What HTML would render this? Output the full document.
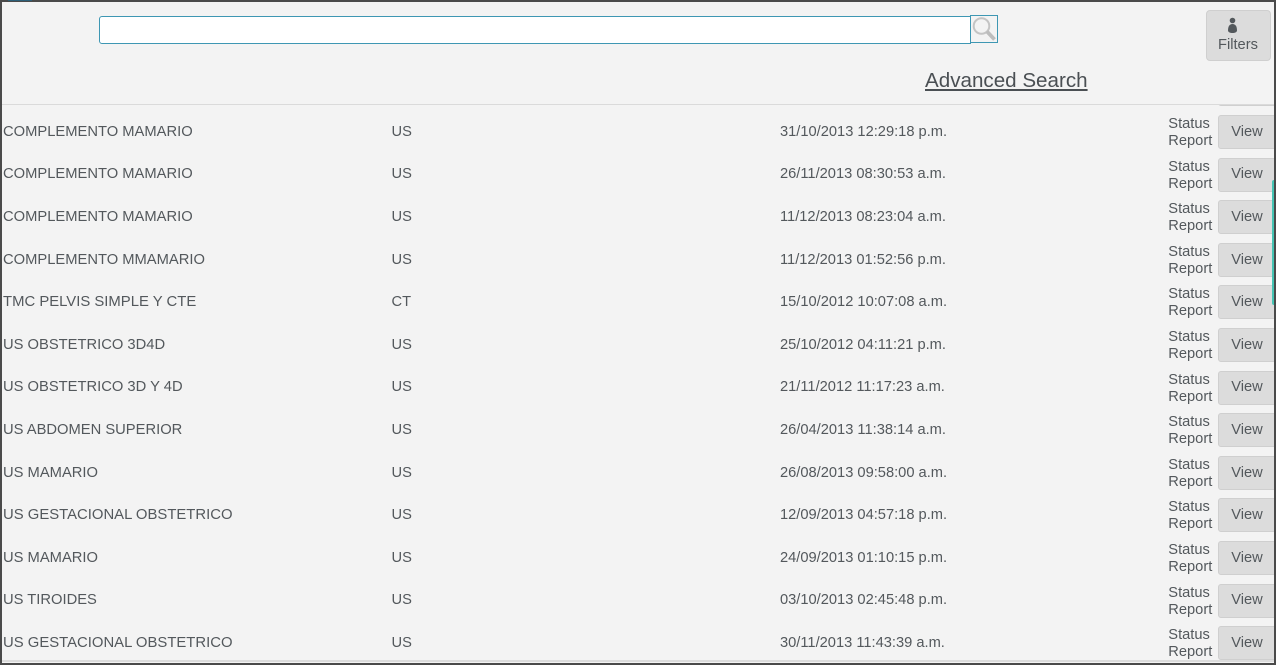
<!DOCTYPE html>
<html>
<head>
<meta charset="utf-8">
<style>
html,body{margin:0;padding:0;width:1276px;height:665px;overflow:hidden;background:#f3f3f3;font-family:"Liberation Sans",sans-serif;color:#53585c;font-size:14.67px}
.a{position:absolute;white-space:nowrap}
#list{position:absolute;left:0;top:105px;width:1274px;height:556px;overflow:hidden}
.r{position:absolute;left:0;width:1274px;height:34px}
.r span{position:absolute;white-space:nowrap;line-height:17px;top:8.8px}
.r .c1{left:3px;font-size:14.74px}.r .c2{left:391.5px}.r .c3{left:780px}
.r .c1.w{font-size:14.86px}
.r .s{left:1168.3px;top:1px;white-space:normal;width:48px}
.r b{position:absolute;font-weight:normal;left:1218px;top:0;width:60px;height:32px;background:#dcdcdc;border:1px solid #cfcfcf;border-radius:3px;text-align:center;line-height:32px;box-sizing:content-box}
.r b i{font-style:normal;position:relative;left:-2px;top:-.2px}
</style>
</head>
<body>
<div class="a" style="left:99px;top:16px;width:872px;height:28px;box-sizing:border-box;background:#fff;border:1px solid #3e97b3;border-radius:3px 0 0 3px"></div>
<div class="a" style="left:970px;top:15px;width:28px;height:28px;box-sizing:border-box;border:1px solid #3e97b3"></div>
<svg class="a" style="left:971px;top:16px" width="26" height="26" viewBox="0 0 26 26"><circle cx="10.5" cy="10" r="7.8" fill="none" stroke="#c4c4c4" stroke-width="2"/><path d="M16 15.500L23.500 23.500" stroke="#bdbdbd" stroke-width="3.800" fill="none"/></svg>
<div class="a" style="left:1206px;top:10px;width:65px;height:51px;box-sizing:border-box;background:#dcdcdc;border:1px solid #cfcfcf;border-radius:4px"></div>
<svg class="a" style="left:1226px;top:16px" width="14" height="18" viewBox="0 0 14 18"><circle cx="6.500" cy="4.500" r="2.800" fill="#53585c"/><path d="M2 14.500C2 10.500 3.500 8 6.500 8S11 10.500 11 14.500C11 16 9 17 6.500 17S2 16 2 14.500Z" fill="#53585c"/></svg>
<div class="a" style="left:1218px;top:36.500px;line-height:17px">Filters</div>
<div class="a" style="left:925px;top:68px;font-size:20.600px;line-height:26px;text-decoration:underline;color:#4a4f53">Advanced Search</div>
<div class="a" style="left:0;top:104px;width:1276px;height:1px;background:#dadada"></div>

<div id="list">
<div class="r" style="top:-32.6px"><span class="s">Status Report</span><b><i>View</i></b></div>
<div class="r" style="top:10px"><span class="c1">COMPLEMENTO MAMARIO</span><span class="c2">US</span><span class="c3">31/10/2013 12:29:18 p.m.</span><span class="s">Status Report</span><b><i>View</i></b></div>
<div class="r" style="top:52.6px"><span class="c1">COMPLEMENTO MAMARIO</span><span class="c2">US</span><span class="c3">26/11/2013 08:30:53 a.m.</span><span class="s">Status Report</span><b><i>View</i></b></div>
<div class="r" style="top:95.2px"><span class="c1">COMPLEMENTO MAMARIO</span><span class="c2">US</span><span class="c3">11/12/2013 08:23:04 a.m.</span><span class="s">Status Report</span><b><i>View</i></b></div>
<div class="r" style="top:137.8px"><span class="c1">COMPLEMENTO MMAMARIO</span><span class="c2">US</span><span class="c3">11/12/2013 01:52:56 p.m.</span><span class="s">Status Report</span><b><i>View</i></b></div>
<div class="r" style="top:180.4px"><span class="c1 w">TMC PELVIS SIMPLE Y CTE</span><span class="c2">CT</span><span class="c3">15/10/2012 10:07:08 a.m.</span><span class="s">Status Report</span><b><i>View</i></b></div>
<div class="r" style="top:223px"><span class="c1">US OBSTETRICO 3D4D</span><span class="c2">US</span><span class="c3">25/10/2012 04:11:21 p.m.</span><span class="s">Status Report</span><b><i>View</i></b></div>
<div class="r" style="top:265.6px"><span class="c1">US OBSTETRICO 3D Y 4D</span><span class="c2">US</span><span class="c3">21/11/2012 11:17:23 a.m.</span><span class="s">Status Report</span><b><i>View</i></b></div>
<div class="r" style="top:308.2px"><span class="c1">US ABDOMEN SUPERIOR</span><span class="c2">US</span><span class="c3">26/04/2013 11:38:14 a.m.</span><span class="s">Status Report</span><b><i>View</i></b></div>
<div class="r" style="top:350.8px"><span class="c1">US MAMARIO</span><span class="c2">US</span><span class="c3">26/08/2013 09:58:00 a.m.</span><span class="s">Status Report</span><b><i>View</i></b></div>
<div class="r" style="top:393.4px"><span class="c1 w">US GESTACIONAL OBSTETRICO</span><span class="c2">US</span><span class="c3">12/09/2013 04:57:18 p.m.</span><span class="s">Status Report</span><b><i>View</i></b></div>
<div class="r" style="top:436px"><span class="c1">US MAMARIO</span><span class="c2">US</span><span class="c3">24/09/2013 01:10:15 p.m.</span><span class="s">Status Report</span><b><i>View</i></b></div>
<div class="r" style="top:478.6px"><span class="c1">US TIROIDES</span><span class="c2">US</span><span class="c3">03/10/2013 02:45:48 p.m.</span><span class="s">Status Report</span><b><i>View</i></b></div>
<div class="r" style="top:521.2px"><span class="c1 w">US GESTACIONAL OBSTETRICO</span><span class="c2">US</span><span class="c3">30/11/2013 11:43:39 a.m.</span><span class="s">Status Report</span><b><i>View</i></b></div>
</div>

<div class="a" style="left:0;top:660px;width:1276px;height:2px;background:#dcdcdc"></div>
<div class="a" style="left:1272px;top:180px;width:2px;height:125px;background:#45c4b4;border-radius:2px 0 0 2px"></div>
<div class="a" style="left:0;top:0;width:1276px;height:2px;background:#4a4a4a"></div>
<div class="a" style="left:8px;top:0;width:24px;height:1px;background:#2c5f78"></div>
<div class="a" style="left:0;top:663px;width:1276px;height:2px;background:#4a4a4a"></div>
<div class="a" style="left:0;top:0;width:2px;height:665px;background:#4a4a4a"></div>
<div class="a" style="left:1274px;top:0;width:2px;height:665px;background:#4a4a4a"></div>
</body>
</html>
